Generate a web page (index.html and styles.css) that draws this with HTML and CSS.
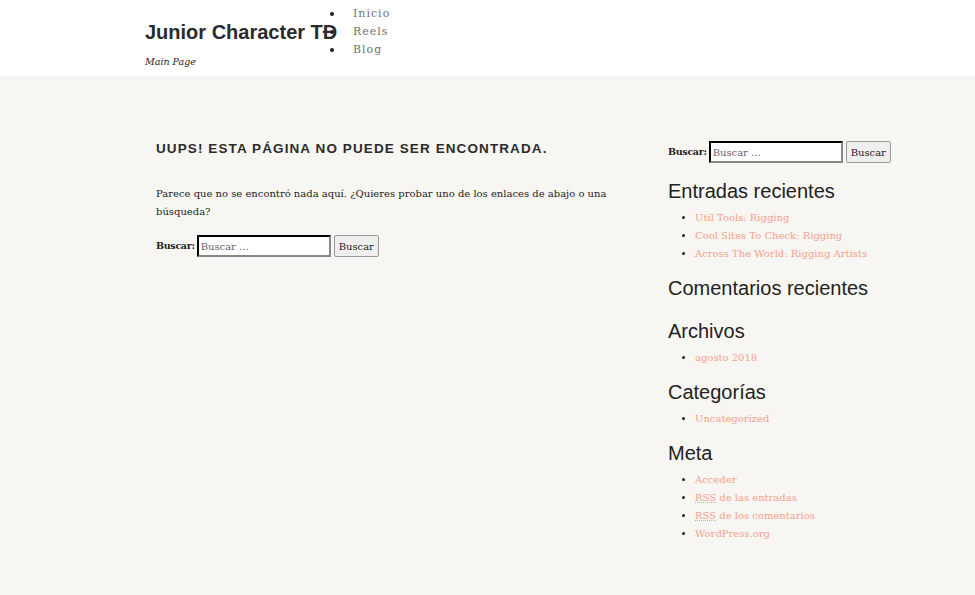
FILE: index.html
```html
<!DOCTYPE html>
<html lang="es">
<head>
    <meta charset="UTF-8">
    <meta name="viewport" content="width=device-width, initial-scale=1.0">
    <title>Página no encontrada – Junior Character TĐ</title>
    <link rel="stylesheet" href="styles.css">
</head>
<body>
    <header class="site_header">
        <div class="branding">
            <p class="site_title"><a href="#">Junior Character TĐ</a></p>
            <p class="site_description">Main Page</p>
        </div>
        <nav class="main_nav">
            <ul>
                <li><a href="#">Inicio</a></li>
                <li><a href="#">Reels</a></li>
                <li><a href="#">Blog</a></li>
            </ul>
        </nav>
    </header>
    <div class="site_content">
        <main class="content_area">
            <h1 class="page_title">Uups! Esta página no puede ser encontrada.</h1>
            <p class="page_text">Parece que no se encontró nada aquí. ¿Quieres probar uno de los enlaces de abajo o una búsqueda?</p>
            <form class="search_form">
                <label>Buscar: <input class="search_field" type="search" placeholder="Buscar …"></label>
                <button class="search_submit" type="button">Buscar</button>
            </form>
        </main>
        <aside class="sidebar">
            <form class="search_form">
                <label>Buscar: <input class="search_field" type="search" placeholder="Buscar …"></label>
                <button class="search_submit" type="button">Buscar</button>
            </form>
            <section class="widget">
                <h2>Entradas recientes</h2>
                <ul>
                    <li><a href="#">Util Tools: Rigging</a></li>
                    <li><a href="#">Cool Sites To Check: Rigging</a></li>
                    <li><a href="#">Across The World: Rigging Artists</a></li>
                </ul>
            </section>
            <section class="widget">
                <h2>Comentarios recientes</h2>
                <ul></ul>
            </section>
            <section class="widget">
                <h2>Archivos</h2>
                <ul>
                    <li><a href="#">agosto 2018</a></li>
                </ul>
            </section>
            <section class="widget">
                <h2>Categorías</h2>
                <ul>
                    <li><a href="#">Uncategorized</a></li>
                </ul>
            </section>
            <section class="widget">
                <h2>Meta</h2>
                <ul>
                    <li><a href="#">Acceder</a></li>
                    <li><a href="#"><abbr title="Really Simple Syndication">RSS</abbr> de las entradas</a></li>
                    <li><a href="#"><abbr title="Really Simple Syndication">RSS</abbr> de los comentarios</a></li>
                    <li><a href="#">WordPress.org</a></li>
                </ul>
            </section>
        </aside>
    </div>
</body>
</html>
```

FILE: styles.css
```css
body {
    margin: 0;
    font-family: "DejaVu Serif", serif;
    font-size: 10px;
    line-height: 18px;
    color: #222;
    background-color: #f8f6f3;
}
a {
    text-decoration: none;
}
p {
    margin: 0;
}
.site_header {
    display: flex;
    height: 76px;
    padding-left: 145px;
    background-color: #fff;
}
.branding {
    position: relative;
    z-index: 1;
    width: 168px;
    white-space: nowrap;
}
.site_title {
    margin-top: 19px;
    font-family: "Liberation Sans", Arial, sans-serif;
    font-size: 20px;
    font-weight: bold;
    line-height: 26px;
}
.site_title a {
    color: #2b2b2b;
}
.site_description {
    margin-top: 8px;
    font-size: 9.5px;
    font-style: italic;
}
.main_nav ul {
    margin: 5px 0 0;
    padding-left: 40px;
    list-style: none;
    font-size: 11px;
    line-height: 18px;
}
.main_nav li {
    position: relative;
}
/* the bullets hang well left of the menu text */
.main_nav li::before {
    content: "";
    position: absolute;
    left: -23px;
    top: 7px;
    width: 4px;
    height: 4px;
    border-radius: 50%;
    background-color: #222;
}
.main_nav a {
    color: #76706b;
    letter-spacing: 1px;
}
.site_content {
    display: flex;
    padding: 0 0 0 156px;
}
.content_area {
    width: 470px;
    padding-top: 63px;
}
.page_title {
    margin: 0 0 26px;
    font-family: "Liberation Sans", Arial, sans-serif;
    font-size: 13.5px;
    font-weight: bold;
    letter-spacing: 1.1px;
    line-height: 20px;
    text-transform: uppercase;
    color: #2b2b2b;
}
.page_text {
    margin-bottom: 14px;
}
.search_form {
    display: flex;
    align-items: center;
    gap: 3px;
    height: 22px;
}
.search_form label {
    display: flex;
    align-items: center;
    gap: 2px;
    font-weight: bold;
    font-size: 9.5px;
    letter-spacing: -0.3px;
}
.search_field {
    box-sizing: border-box;
    width: 134px;
    height: 22px;
    padding: 1px 2px;
    border: 2px inset #767676;
    border-color: #555 #888 #888 #555;
    font-family: "DejaVu Serif", serif;
    font-size: 10px;
    letter-spacing: 0;
    background: #fff;
}
.search_field::placeholder {
    color: #666;
}
.search_submit {
    box-sizing: border-box;
    height: 22px;
    padding: 0 4px;
    border: 1px solid #999;
    border-radius: 2px;
    background-color: #efefef;
    font-family: "DejaVu Serif", serif;
    font-size: 10px;
    color: #222;
}
.sidebar {
    display: flex;
    flex-direction: column;
    gap: 13px;
    margin-left: 42px;
    padding-top: 65px;
    padding-bottom: 20px;
}
.sidebar .search_form {
    margin-bottom: 3px;
}
.widget h2 {
    margin: 0 0 6px;
    font-family: "Liberation Sans", Arial, sans-serif;
    font-size: 20px;
    font-weight: normal;
    line-height: 24px;
    color: #222;
}
.widget ul {
    margin: 0;
    padding-left: 27px;
}
.widget a {
    color: #f5a08c;
}
abbr {
    text-decoration: underline dotted;
}
```
